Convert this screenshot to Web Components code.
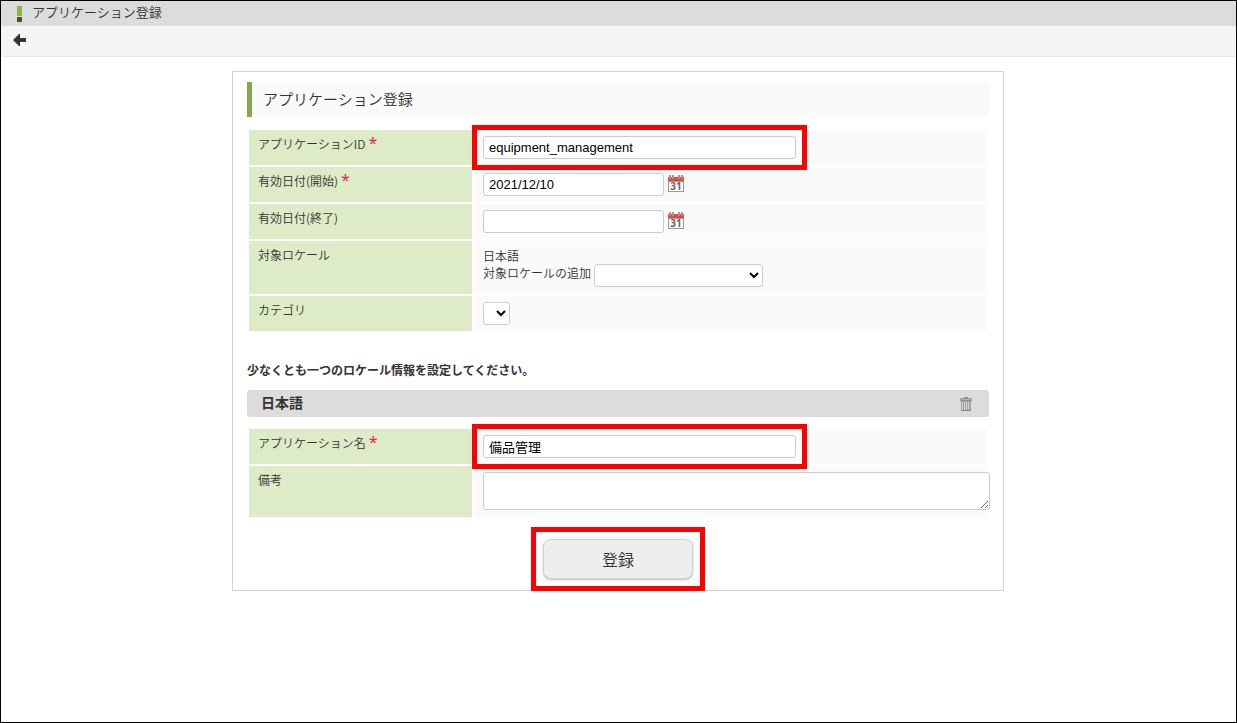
<!DOCTYPE html>
<html lang="ja">
<head>
<meta charset="utf-8">
<title>アプリケーション登録</title>
<style>
  body { margin: 0; font: 12px/18px "Noto Sans CJK JP", sans-serif; color: #333; background: #fff; }
</style>
</head>
<body>
<app-frame>
  <page-header slot="header">アプリケーション登録</page-header>
  <tool-bar slot="header"></tool-bar>
  <application-form></application-form>
</app-frame>

<template id="app-frame">
  <style>
    :host { display: block; box-sizing: border-box; min-height: 100vh; border: 1px solid #000; }
    main { padding: 14px 17px 14px 16px; }
  </style>
  <slot name="header"></slot>
  <main><slot></slot></main>
</template>

<template id="page-header">
  <style>
    :host { display: block; background: #dcdcdc; }
    header { display: flex; align-items: center; gap: 10px; height: 25px; padding-left: 16px; }
    svg { display: block; margin-top: 1px; }
    h1 { margin: 0; font-size: 13px; line-height: 20px; font-weight: 350; padding-bottom: 3px; }
  </style>
  <header>
    <svg width="5" height="16" aria-hidden="true"><path fill="#8ab34a" d="M0 0h5v10H0z"/><path fill="#4b4b41" d="M0 11h5v5H0z"/></svg>
    <h1><slot></slot></h1>
  </header>
</template>

<template id="tool-bar">
  <style>
    :host { display: block; background: #f4f4f4; border-bottom: 1px solid #eaeaea; }
    nav { display: flex; height: 30px; padding: 0 12px; }
    a { display: flex; align-items: center; }
    svg { display: block; margin-bottom: 2px; }
  </style>
  <nav>
    <a href="#" aria-label="戻る"><svg width="13" height="12" aria-hidden="true"><path fill="#333" d="M0 6 6 0h1v4h6v4H7v4H6z"/></svg></a>
  </nav>
</template>

<template id="form-card">
  <style>
    :host { display: block; box-sizing: border-box; max-width: 772px; margin: 0 auto; padding: 10px 14px 11px; border: 1px solid #d2d2d2; background: #fff; }
    h2 { margin: 0; padding: 0 0 2px 11px; border-left: 5px solid #83a94c; background: #fafafa; font-size: 15px; line-height: 33px; font-weight: 350; }
  </style>
  <h2><slot name="title"></slot></h2>
  <slot></slot>
</template>

<template id="form-row">
  <style>
    :host { display: grid; grid-template-columns: 223fr 513fr; gap: 2px; min-height: 35px; }
    .name { padding: 5px 9px; background: #deebc7; font-weight: 350; }
    .name ::slotted(label), .name ::slotted(span) { display: inline-block; }
    :host([required]) .name::after { content: "*"; color: #e8174b; font: 16px/12px "Open Sans", sans-serif; margin-left: 3px; }
    .field { min-width: 0; padding: 6px 0 6px 9px; background: #fafafa; }
  </style>
  <div class="name"><slot name="label"></slot></div>
  <div class="field"><slot></slot></div>
</template>

<template id="mark-box">
  <style>
    :host { display: block; position: relative; width: fit-content; max-width: 100%; }
    :host::after { content: ""; position: absolute; inset: -11px; border: 5px solid #f00; pointer-events: none; }
    :host([wide])::after { inset: -12px; }
  </style>
  <slot></slot>
</template>

<template id="calendar-button">
  <style>
    :host { display: block; }
    button { display: block; padding: 2px 0 0; border: 0; background: none; cursor: pointer; }
    svg { display: block; }
    text { font: bold 10px "Open Sans", sans-serif; fill: #666; }
  </style>
  <button type="button" aria-label="日付を選択">
    <svg width="16" height="17" aria-hidden="true">
      <path fill="#999" d="M0 6h16v11H0z"/><path fill="#fff" d="M1 7h14v9H1z"/>
      <path fill="#f44336" d="M0 2h16v4H0z"/>
      <path fill="#999" d="M1 0h2v4H1zM4 0h2v4H4zM10 0h2v4h-2zM13 0h2v4h-2z"/>
      <text x="8" y="15" text-anchor="middle">31</text>
    </svg>
  </button>
</template>

<template id="locale-bar">
  <style>
    :host { display: flex; align-items: center; justify-content: space-between; height: 27px; padding: 0 17px 0 14px; border-radius: 3px; background: #dcdcdc; }
    h3 { margin: 0; padding-bottom: 3px; font-size: 14px; line-height: 24px; font-weight: 700; }
    button { display: block; padding: 0; border: 0; background: none; cursor: pointer; }
    svg { display: block; }
  </style>
  <h3><slot></slot></h3>
  <button type="button" aria-label="削除">
    <svg width="12" height="14" aria-hidden="true">
      <path fill="#929296" d="M4 0h4v1h3l1 1v2H0V2l1-1h3z"/><path fill="#b8b8bc" d="M1 2h10v1H1z"/>
      <path fill="#a0a0a6" d="M1 4h10v10H1z"/><path fill="#858589" d="M1 13h10v1H1z"/>
      <path fill="#d2d2d6" d="M2 5h1v8H2zM4 5h1v8H4zM6 5h1v8H6zM8 5h1v8H8z"/>
    </svg>
  </button>
</template>

<template id="application-form">
  <style>
    :host { display: block; }
    .rows { display: grid; gap: 2px; padding: 0 2px; margin-top: 13px; }
    .rows.locale { margin-top: 12px; }
    .locale-row { min-height: 53px; }
    .note-row { min-height: 51px; }
    input, select, textarea { box-sizing: border-box; border: 1px solid #ccc; border-radius: 3px; background-color: #fff; color: #000; font: 13px "Liberation Sans", "Noto Sans CJK JP", sans-serif; }
    input { display: block; height: 23px; padding: 0 5px; }
    .long { width: 313px; max-width: 100%; }
    .date { width: 181px; }
    .line { display: flex; align-items: flex-start; gap: 4px; }
    .add { gap: 3px; line-height: 17px; }
    p { margin: 0; line-height: 17px; font-weight: 350; }
    .add label { font-weight: 350; }
    select { height: 23px; padding: 0 4px; }
    .wide { width: 169px; }
    .small { display: block; width: 27px; }
    textarea { display: block; width: calc(100% + 3px); height: 38px; }
    .message { margin: 30px 0 11px; font-weight: 700; line-height: 18px; }
    .actions { display: flex; justify-content: center; margin-top: 22px; }
    .submit { display: block; width: 150px; height: 40px; padding: 0; border: 1px solid #d2d2d2; border-radius: 8px; background: #eee; box-shadow: 0 1px 2px #bbb; color: #333; font: 350 16px/24px "Noto Sans CJK JP", sans-serif; }
  </style>
  <form>
    <form-card>
      <span slot="title">アプリケーション登録</span>
      <div class="rows">
        <form-row required>
          <label slot="label" for="app-id">アプリケーションID</label>
          <mark-box><input id="app-id" class="long" type="text" value="equipment_management"></mark-box>
        </form-row>
        <form-row required>
          <label slot="label" for="start">有効日付(開始)</label>
          <div class="line"><input id="start" class="date" type="text" value="2021/12/10"><calendar-button></calendar-button></div>
        </form-row>
        <form-row>
          <label slot="label" for="end">有効日付(終了)</label>
          <div class="line"><input id="end" class="date" type="text"><calendar-button></calendar-button></div>
        </form-row>
        <form-row class="locale-row">
          <span slot="label">対象ロケール</span>
          <p>日本語</p>
          <div class="line add"><label for="locale">対象ロケールの追加</label><select id="locale" class="wide"><option></option></select></div>
        </form-row>
        <form-row>
          <label slot="label" for="category">カテゴリ</label>
          <select id="category" class="small"><option></option></select>
        </form-row>
      </div>
      <p class="message">少なくとも一つのロケール情報を設定してください。</p>
      <locale-bar>日本語</locale-bar>
      <div class="rows locale">
        <form-row required>
          <label slot="label" for="app-name">アプリケーション名</label>
          <mark-box><input id="app-name" class="long" type="text" value="備品管理"></mark-box>
        </form-row>
        <form-row class="note-row">
          <label slot="label" for="note">備考</label>
          <textarea id="note"></textarea>
        </form-row>
      </div>
      <div class="actions"><mark-box wide><button class="submit" type="button">登録</button></mark-box></div>
    </form-card>
  </form>
</template>

<script>
  class TemplateElement extends HTMLElement {
    constructor() {
      super();
      const template = document.getElementById(this.localName);
      this.attachShadow({ mode: "open" }).append(template.content.cloneNode(true));
    }
  }
  for (const name of ["app-frame", "page-header", "tool-bar", "form-card", "form-row", "mark-box", "calendar-button", "locale-bar", "application-form"]) {
    customElements.define(name, class extends TemplateElement {});
  }
</script>
</body>
</html>
